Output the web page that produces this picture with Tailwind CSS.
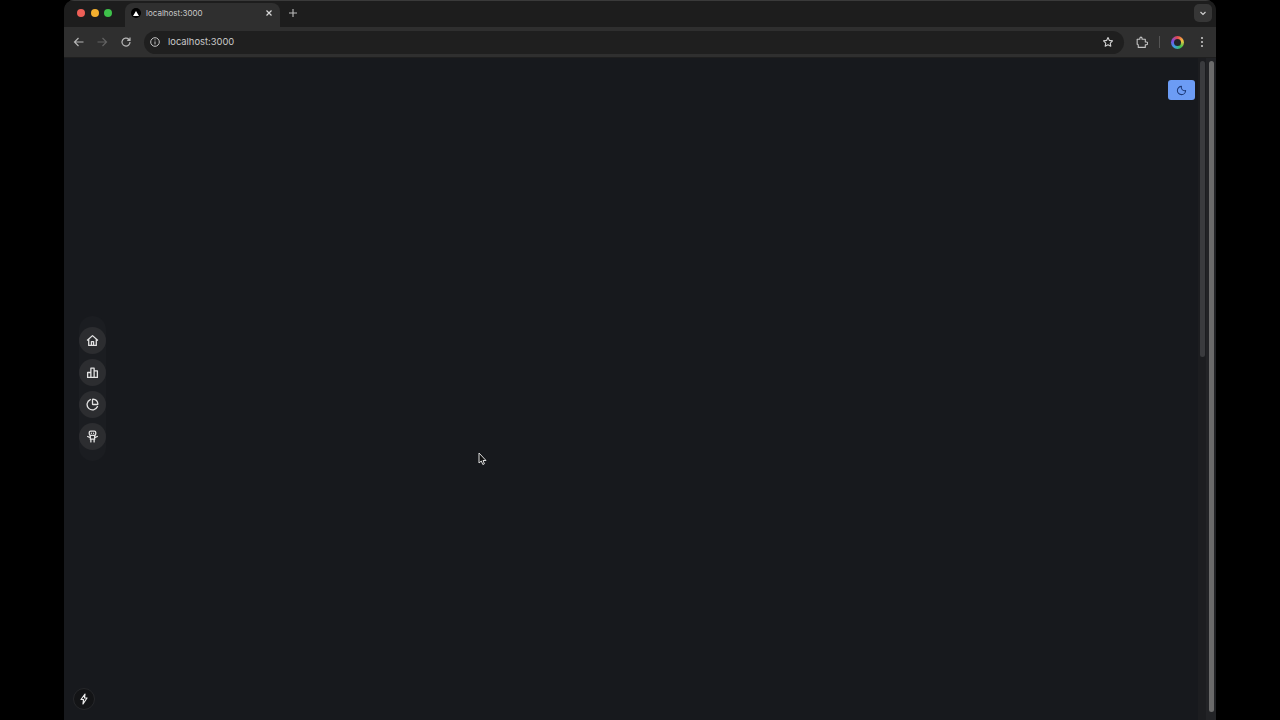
<!DOCTYPE html>
<html lang="en">
<head>
  <meta charset="UTF-8" />
  <script src="https://cdn.jsdelivr.net/npm/@tailwindcss/browser@4"></script>
  <title>localhost:3000</title>
</head>
<body class="bg-black overflow-hidden font-['Inter','Liberation_Sans',sans-serif]">
  <div class="h-[720px] flex justify-center">
    <!-- Browser window -->
    <div class="w-[1152px] h-full flex flex-col rounded-t-[10px] overflow-hidden bg-[#1e1e1e]">
      <!-- Tab strip -->
      <div class="h-[27px] flex items-end bg-[#1d1d1d] shrink-0 border-t border-[#3a3a3a]">
        <div class="flex items-center gap-[4px] pl-[13px] pb-[2px] w-[61px] h-full">
          <span class="w-[8px] h-[8px] rounded-full bg-[#ed5f57] shrink-0"></span>
          <span class="w-[8px] h-[8px] rounded-full bg-[#f4b02f] shrink-0 ml-[2px]"></span>
          <span class="w-[8px] h-[8px] rounded-full bg-[#3ec14a] shrink-0 ml-[1px]"></span>
        </div>
        <div class="w-[155px] h-[24px] flex items-center bg-[#2f2f2f] rounded-t-[8px] pl-[6px] pr-[7px] pb-[4px]">
          <span class="w-[10px] h-[10px] rounded-full bg-black flex items-center justify-center shrink-0">
            <svg width="6" height="5" viewBox="0 0 6 5"><path d="M3 0l3 5H0z" fill="#fff"/></svg>
          </span>
          <span class="ml-[5px] text-[8px] text-[#c9c9c9] leading-none">localhost:3000</span>
          <svg class="ml-auto" width="8" height="8" viewBox="0 0 8 8" fill="none" stroke="#d8d8d8" stroke-width="1.2"><path d="M1.5 1.5l5 5M6.5 1.5l-5 5"/></svg>
        </div>
        <div class="h-[24px] flex items-center ml-[8px] pb-[4px]">
          <svg width="10" height="10" viewBox="0 0 10 10" fill="none" stroke="#bdbdbd" stroke-width="1.1"><path d="M5 1v8M1 5h8"/></svg>
        </div>
        <div class="ml-auto h-full flex items-center pr-[4px] pb-[2px]">
          <div class="w-[18px] h-[18px] rounded-[5px] bg-[#363636] flex items-center justify-center">
            <svg width="8" height="8" viewBox="0 0 8 8" fill="none" stroke="#d0d0d0" stroke-width="1.2"><path d="M1.5 3l2.5 2.5L6.5 3"/></svg>
          </div>
        </div>
      </div>

      <!-- Toolbar -->
      <div class="h-[31px] flex items-center bg-[#2f2f2f] shrink-0 pl-[8px] border-b border-[#1f1f1f]">
        <svg class="ml-[1px]" width="12" height="12" viewBox="0 0 12 12" fill="none" stroke="#b5b5b5" stroke-width="1.2"><path d="M10.5 6h-9M5.5 2l-4 4 4 4"/></svg>
        <svg class="ml-[11px]" width="12" height="12" viewBox="0 0 12 12" fill="none" stroke="#626262" stroke-width="1.2"><path d="M1.5 6h9M6.5 2l4 4-4 4"/></svg>
        <svg class="ml-[12px]" width="12" height="12" viewBox="0 0 12 12" fill="none" stroke="#b5b5b5" stroke-width="1.2"><path d="M10 6a4 4 0 1 1-1.2-2.8L10 4.4M10 1.6v2.8H7.2"/></svg>
        <div class="ml-[12px] w-[980px] h-[23px] rounded-full bg-[#1f1f1f] flex items-center pl-[5px] pr-[10px]">
          <svg width="12" height="12" viewBox="0 0 12 12" fill="none" stroke="#c4c4c4" stroke-width="1"><circle cx="6" cy="6" r="4.3"/><path d="M6 5.4v3M6 3.4v1"/></svg>
          <span class="ml-[7px] text-[9.4px] text-[#c9c9c9] leading-none">localhost:3000</span>
          <svg class="ml-auto" width="12" height="12" viewBox="0 0 24 24" fill="none" stroke="#d0d0d0" stroke-width="2.2" stroke-linejoin="round"><path d="M12 3l2.800 5.800 6.200.9-4.500 4.400 1.100 6.300L12 17.400l-5.600 3 1.100-6.300L3 9.700l6.200-.9z"/></svg>
        </div>
        <svg class="ml-[11px]" width="13" height="13" viewBox="0 0 24 24" fill="none" stroke="#c4c4c4" stroke-width="2" stroke-linejoin="round"><path d="M4 6h5V4a2 2 0 0 1 4 0v2h6v5h2a2.500 2.500 0 0 1 0 5h-2v5H6v-4a2 2 0 0 0-2-2z"/></svg>
        <span class="ml-[11px] w-px h-[12px] bg-[#555]"></span>
        <span class="ml-[11px] w-[13px] h-[13px] rounded-full bg-[conic-gradient(#e5484d,#f5c542,#3ec14a,#3aa0e8,#7a4de0,#e5484d)] flex items-center justify-center">
          <span class="w-[7px] h-[7px] rounded-full bg-[#23252a]"></span>
        </span>
        <svg class="ml-[16px]" width="4" height="12" viewBox="0 0 4 12" fill="#c4c4c4"><circle cx="2" cy="2" r="1.100"/><circle cx="2" cy="6" r="1.100"/><circle cx="2" cy="10" r="1.100"/></svg>
      </div>

      <!-- Page area -->
      <div class="relative flex-1 flex bg-[#17191d] min-h-0">
        <main class="flex-1"></main>

        <!-- Page scrollbar -->
        <div class="w-[8px] bg-[#1c1d20] pt-[3px] shrink-0 pl-[2px]">
          <div class="w-[5px] h-[296px] rounded-full bg-[#3a3b3e]"></div>
        </div>

        <!-- Outer scrollbar -->
        <div class="w-[10px] bg-[#222326] pt-[3px] pb-[8px] pl-[3px] shrink-0">
          <div class="w-[5px] h-full rounded-full bg-[#6b6b6b]"></div>
        </div>

        <!-- Theme toggle -->
        <button class="absolute top-[22px] right-[21px] w-[27px] h-[20px] rounded-[3px] bg-[#6c9cf5] flex items-center justify-center">
          <svg width="11" height="11" viewBox="0 0 24 24" fill="none" stroke="#1d3a78" stroke-width="2.2" stroke-linecap="round" stroke-linejoin="round"><path d="M12 3a7 7 0 0 0 9 9 9 9 0 1 1-9-9z"/></svg>
        </button>

        <!-- Side nav -->
        <nav class="absolute left-[15px] top-[258px] w-[27px] py-[11px] rounded-full bg-[#1b1d21] flex flex-col gap-[5px] items-center">
          <a class="w-[27px] h-[27px] rounded-full bg-[#2c2d30] flex items-center justify-center">
            <svg width="13" height="13" viewBox="0 0 24 24" fill="none" stroke="#e2e2e2" stroke-width="2.400" stroke-linejoin="round"><path d="M2 12L12 3l10 9M5 10v11h14V10M10 21v-7h4v7"/></svg>
          </a>
          <a class="w-[27px] h-[27px] rounded-full bg-[#2c2d30] flex items-center justify-center">
            <svg width="13" height="13" viewBox="0 0 24 24" fill="none" stroke="#e2e2e2" stroke-width="2.400" stroke-linejoin="round"><path d="M3 21V12h6v9zM9 21V4h6v17zM15 21V9h6v12z"/></svg>
          </a>
          <a class="w-[27px] h-[27px] rounded-full bg-[#2c2d30] flex items-center justify-center">
            <svg width="13" height="13" viewBox="0 0 24 24" fill="none" stroke="#e2e2e2" stroke-width="2.400" stroke-linecap="round" stroke-linejoin="round"><path d="M21 12c.552 0 1.005-.449.95-.998a10 10 0 0 0-8.953-8.951c-.55-.055-.998.398-.998.95v8a1 1 0 0 0 1 1z"/><path d="M21.210 15.890A10 10 0 1 1 8 2.830"/></svg>
          </a>
          <a class="w-[27px] h-[27px] rounded-full bg-[#2c2d30] flex items-center justify-center">
            <svg width="13" height="13" viewBox="0 0 24 24" fill="none" stroke="#e2e2e2" stroke-width="2.400" stroke-linecap="round" stroke-linejoin="round"><rect x="6" y="2" width="12" height="8" rx="2.500"/><path d="M10 6h.01M14 6h.01M8 10v7h8v-7M3 12l5 2M21 12l-5 2M9 17v5M15 17v5"/></svg>
          </a>
        </nav>

        <!-- Dev indicator -->
        <div class="absolute left-[9px] bottom-[10px] w-[22px] h-[22px] rounded-full bg-[#131416] border border-[#26272a] flex items-center justify-center">
          <svg width="12" height="12" viewBox="0 0 24 24" fill="none" stroke="#ededed" stroke-width="2.400" stroke-linejoin="round"><path d="M14 2L6 13h5l-1 9 8-12h-5z"/></svg>
        </div>

        <!-- Cursor -->
        <svg class="absolute left-[414px] top-[394px]" width="9" height="14" viewBox="0 0 9 14"><path d="M1 1v10l2.300-2 1.500 3.500 1.600-.7L5 8.500h3z" fill="#111" stroke="#ddd" stroke-width="1"/></svg>
      </div>
    </div>
  </div>
</body>
</html>
